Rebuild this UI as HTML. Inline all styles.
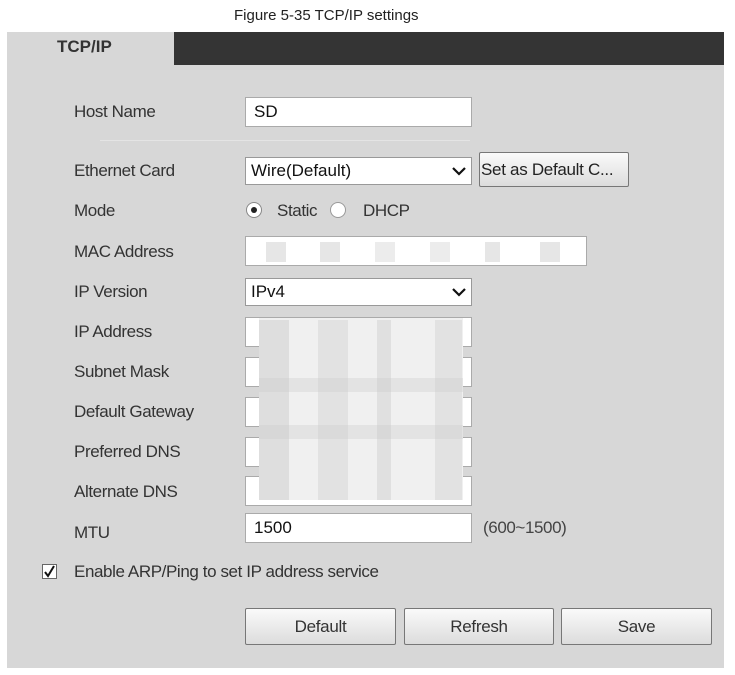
<!DOCTYPE html>
<html><head><meta charset="utf-8"><style>
*{margin:0;padding:0;box-sizing:border-box}
body{width:735px;height:675px;background:#fff;position:relative;overflow:hidden;font-family:"Liberation Sans",sans-serif;color:#333}
.a{position:absolute}
#panel{left:7px;top:32px;width:717px;height:636px;background:#d7d7d7}
#bar{left:174px;top:32px;width:550px;height:33px;background:#343434}
.lbl{position:absolute;left:74px;font-size:17px;color:#333;letter-spacing:-0.4px}
.in{position:absolute;left:245px;width:227px;height:30px;background:#fff;border:1px solid #aaa;font-size:17px;padding-left:8px;line-height:28px;color:#111}
.sel{position:absolute;left:245px;width:227px;height:28px;background:#fff;border:1px solid #999;font-size:17px;padding-left:5px;line-height:26px;color:#111}
.sel svg{position:absolute;right:5px;top:8px}
.btn{position:absolute;top:608px;height:37px;border:1px solid #777;border-radius:2px;background:linear-gradient(#fafafa,#dcdcdc);font-size:17px;text-align:center;line-height:35px;color:#333;letter-spacing:-0.3px}
.blk{position:absolute;background:#c8c8c8}
</style></head><body>
<div class="a" style="left:234px;top:7px;font-size:15px;color:#222">Figure 5-35 TCP/IP settings</div>
<div class="a" id="panel"></div>
<div class="a" id="bar"></div>
<div class="a" style="left:57px;top:37px;font-size:17px;font-weight:bold;color:#333">TCP/IP</div>

<div class="lbl" style="top:102px">Host Name</div>
<div class="in" style="top:97px">SD</div>
<div class="a" style="left:100px;top:140px;width:370px;height:1px;background:#e4e4e4"></div>

<div class="lbl" style="top:161px">Ethernet Card</div>
<div class="sel" style="top:157px">Wire(Default)<svg width="14" height="10"><path d="M1 2L7 8L13 2" stroke="#111" stroke-width="2.2" fill="none"/></svg></div>
<div class="btn" style="left:479px;top:152px;width:150px;height:35px;line-height:33px;text-align:left;padding-left:1px;font-size:17px;color:#222">Set as Default C...</div>

<div class="lbl" style="top:201px">Mode</div>
<div class="a" style="left:246px;top:202px;width:16px;height:16px;border-radius:50%;border:1px solid #888;background:#fff"><div style="position:absolute;left:4px;top:4px;width:6px;height:6px;border-radius:50%;background:#222"></div></div>
<div class="a" style="left:277px;top:201px;font-size:17px;letter-spacing:-0.4px">Static</div>
<div class="a" style="left:330px;top:202px;width:16px;height:16px;border-radius:50%;border:1px solid #999;background:#fff"></div>
<div class="a" style="left:363px;top:201px;font-size:17px;letter-spacing:-0.4px">DHCP</div>

<div class="lbl" style="top:242px">MAC Address</div>
<div class="in" style="top:236px;width:342px"></div>
<div class="blk" style="left:266px;top:242px;width:20px;height:20px;opacity:.45"></div>
<div class="blk" style="left:320px;top:242px;width:20px;height:20px;opacity:.45"></div>
<div class="blk" style="left:375px;top:242px;width:20px;height:20px;opacity:.35"></div>
<div class="blk" style="left:430px;top:242px;width:20px;height:20px;opacity:.35"></div>
<div class="blk" style="left:485px;top:242px;width:15px;height:20px;opacity:.45"></div>
<div class="blk" style="left:540px;top:242px;width:20px;height:20px;opacity:.45"></div>

<div class="lbl" style="top:282px">IP Version</div>
<div class="sel" style="top:278px">IPv4<svg width="14" height="10"><path d="M1 2L7 8L13 2" stroke="#111" stroke-width="2.2" fill="none"/></svg></div>

<div class="lbl" style="top:322px">IP Address</div>
<div class="lbl" style="top:362px">Subnet Mask</div>
<div class="lbl" style="top:402px">Default Gateway</div>
<div class="lbl" style="top:442px">Preferred DNS</div>
<div class="lbl" style="top:482px">Alternate DNS</div>
<div class="in" style="top:317px"></div>
<div class="in" style="top:357px"></div>
<div class="in" style="top:397px"></div>
<div class="in" style="top:437px"></div>
<div class="in" style="top:476px"></div>
<div class="a" style="left:259px;top:318px;width:204px;height:182px;background:#f0f0f0"></div>
<div class="blk" style="left:259px;top:320px;width:30px;height:180px;opacity:.45"></div>
<div class="blk" style="left:318px;top:320px;width:30px;height:180px;opacity:.35"></div>
<div class="blk" style="left:377px;top:320px;width:14px;height:180px;opacity:.4"></div>
<div class="blk" style="left:435px;top:320px;width:27px;height:180px;opacity:.35"></div>
<div class="blk" style="left:259px;top:378px;width:204px;height:14px;opacity:.3"></div>
<div class="blk" style="left:259px;top:425px;width:204px;height:14px;opacity:.3"></div>

<div class="lbl" style="top:523px">MTU</div>
<div class="in" style="top:513px;font-size:17px">1500</div>
<div class="a" style="left:483px;top:518px;font-size:17px;letter-spacing:-0.4px;color:#444">(600~1500)</div>

<div class="a" style="left:42px;top:564px;width:15px;height:15px;border:1px solid #666;background:#fff"><svg width="13" height="13" style="position:absolute;left:0;top:0"><path d="M2 7L5 11L11 1" stroke="#111" stroke-width="2" fill="none"/></svg></div>
<div class="a" style="left:74px;top:562px;font-size:17px;letter-spacing:-0.4px">Enable ARP/Ping to set IP address service</div>

<div class="btn" style="left:245px;width:151px">Default</div>
<div class="btn" style="left:404px;width:150px">Refresh</div>
<div class="btn" style="left:561px;width:151px">Save</div>
</body></html>
